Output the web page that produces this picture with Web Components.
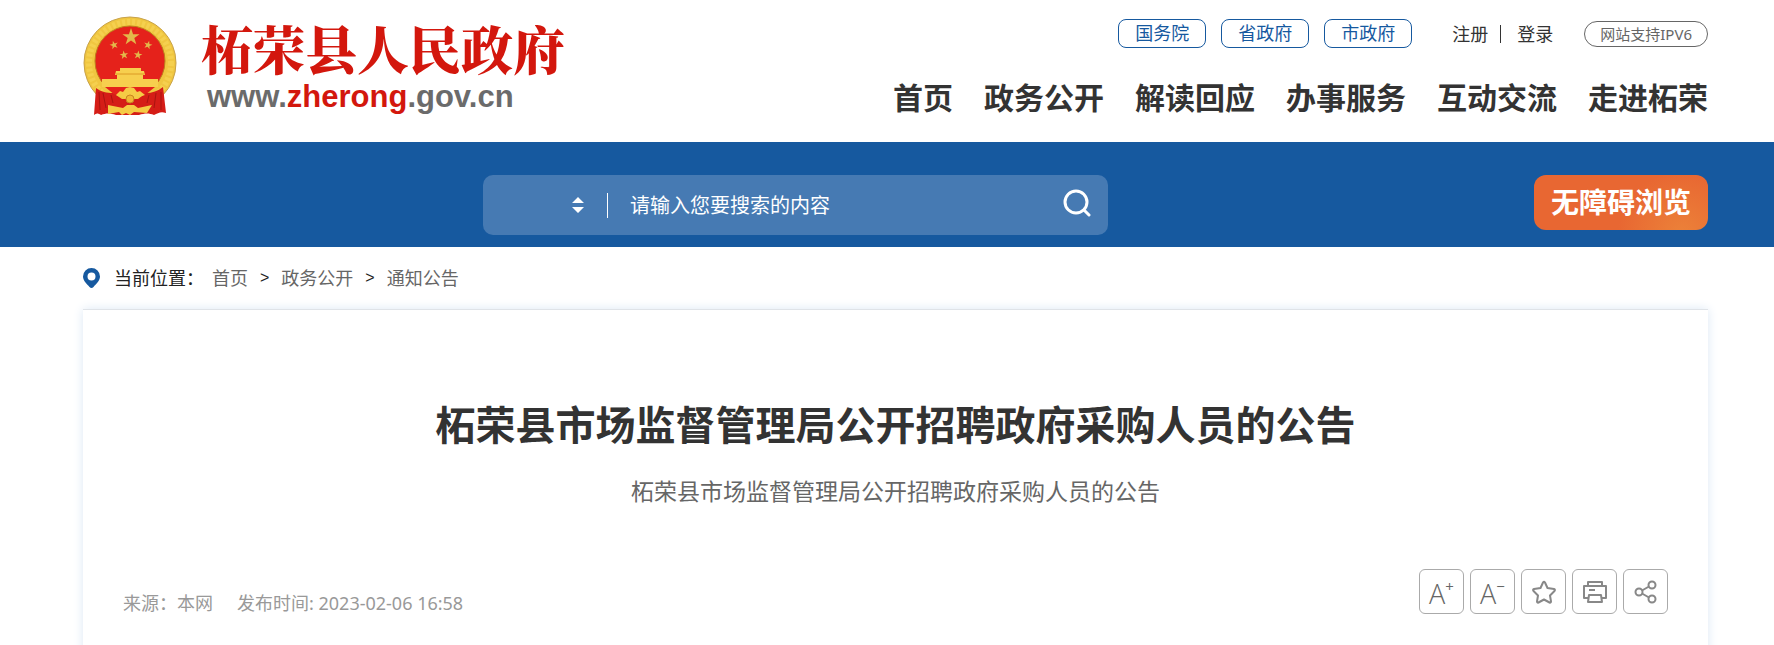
<!DOCTYPE html>
<html lang="zh-CN">
<head>
<meta charset="utf-8">
<title>柘荣县市场监督管理局公开招聘政府采购人员的公告</title>
<style>
  body {
    margin: 0;
    background: #fff;
    color: #333;
    font-family: "Noto Sans", "Noto Sans CJK SC", sans-serif;
    font-size: 18px;
    line-height: 28px;
    --blue: #16599f;
    --left: 83px;
    --right: 66px;
  }
</style>
</head>
<body>

<site-header>
  <site-logo slot="logo"></site-logo>
  <top-links slot="top"></top-links>
  <main-nav slot="nav"></main-nav>
</site-header>
<search-bar></search-bar>
<bread-crumb></bread-crumb>
<article-card>
  <span slot="title">柘荣县市场监督管理局公开招聘政府采购人员的公告</span>
  <span slot="subtitle">柘荣县市场监督管理局公开招聘政府采购人员的公告</span>
  <span slot="source">来源：本网</span>
  <span slot="date">发布时间: 2023-02-06 16:58</span>
  <tool-bar slot="tools"></tool-bar>
</article-card>

<template id="site-header">
  <style>
    :host { display: block; }
    header {
      display: flex;
      justify-content: space-between;
      align-items: flex-start;
      padding: 16px var(--right) 24px var(--left);
    }
    .right {
      display: flex;
      flex-direction: column;
      align-items: flex-end;
      gap: 30px;
      padding-top: 3px;
    }
  </style>
  <header>
    <slot name="logo"></slot>
    <div class="right">
      <slot name="top"></slot>
      <slot name="nav"></slot>
    </div>
  </header>
</template>

<template id="site-logo">
  <style>
    :host { display: block; }
    a { display: flex; gap: 22px; color: #d3170d; text-decoration: none; }
    svg { display: block; width: 96px; height: 100px; }
    .name {
      display: block;
      font: 900 52px/64px "Noto Serif CJK SC", "Noto Sans CJK SC", serif;
      white-space: nowrap;
    }
    .url {
      display: block;
      padding-left: 6px;
      font: bold 31px/34px "Liberation Sans", sans-serif;
      color: #6b6b6b;
    }
    b { color: #d3170d; }
  </style>
  <a href="#">
    <svg viewBox="0 0 96 100" aria-hidden="true">
      <defs>
        <path id="star" d="M0-10 2.3-3.1 9.5-3.1 3.7 1.2 5.9 8.1 0 3.8-5.9 8.1-3.7 1.2-9.5-3.1-2.3-3.1z"/>
      </defs>
      <circle cx="47" cy="47" r="46" fill="#f0c640" stroke="#c8a24a"/>
      <circle cx="47" cy="47" r="41" fill="none" stroke="#f5d04f" stroke-width="6" stroke-dasharray="3 2"/>
      <circle cx="47" cy="45" r="35" fill="#e5221b" stroke="#bd7d1c"/>
      <g fill="#e3b84a">
        <use href="#star" transform="translate(48 21) scale(.9)"/>
        <use href="#star" transform="translate(31 29) rotate(-15) scale(.45)"/>
        <use href="#star" transform="translate(65 29) rotate(15) scale(.45)"/>
        <use href="#star" transform="translate(41 39) rotate(-8) scale(.45)"/>
        <use href="#star" transform="translate(55 39) rotate(8) scale(.45)"/>
      </g>
      <path fill="#f7cf4e" d="M37 52h21v3h3l1 4h-2v4h15v8H19v-8h15v-4h-2l1-4h4z"/>
      <path stroke="#dc9a25" d="M33 58h28" fill="none"/>
      <path fill="#e5221b" d="M22 71h50l-10 8H32z"/>
      <path fill="#d51d17" d="M13 72c5 4 11 5 17 5l9 6h16l8-6c6 0 12-2 17-6l3 26c-5-2-8 0-12 2-5-2-9-2-15 0H33c-6-2-10-2-15 0-3-2-5-2-7 0z"/>
      <path stroke="#a91410" stroke-width="1" fill="none" d="M20 77l3 15M28 79l2 8M73 77l-2 15M66 79l-2 8M16 76l1 18M78 76v18"/>
      <path fill="#f5cb45" d="M33 79l4-4 3 1 3-4 4-1 4 1 3 4 3-1 5 4-6 2-4 2H43l-4-2z"/>
      <path fill="#f5cb45" d="M25 89l15 3 4-3h7l4 3 14-3-5 8-13-1-4 3-4-2-4 2-3-3-11 2z"/>
      <circle cx="47" cy="83" r="4" fill="#f1b735" stroke="#c78420"/>
    </svg>
    <span>
      <span class="name">柘荣县人民政府</span>
      <span class="url">www.<b>zherong</b>.gov.cn</span>
    </span>
  </a>
</template>

<template id="top-links">
  <style>
    :host { display: flex; align-items: center; height: 29px; white-space: nowrap; }
    a { color: #333; text-decoration: none; }
    .gov { display: flex; gap: 15px; margin-right: 40px; }
    .gov a {
      padding: 0 16px;
      border: 1px solid var(--blue);
      border-radius: 8px;
      color: var(--blue);
      line-height: 27px;
    }
    .user { display: flex; align-items: center; }
    .user i { width: 1px; height: 18px; margin: 0 16px 0 12px; background: #333; }
    .ipv6 {
      margin-left: 31px;
      padding: 0 15px;
      border: 1px solid #666;
      border-radius: 13px;
      color: #666;
      font-size: 15px;
      line-height: 24px;
    }
  </style>
  <div class="gov">
    <a href="#">国务院</a>
    <a href="#">省政府</a>
    <a href="#">市政府</a>
  </div>
  <div class="user"><a href="#">注册</a><i></i><a href="#">登录</a></div>
  <a class="ipv6" href="#">网站支持IPV6</a>
</template>

<template id="main-nav">
  <style>
    :host { display: block; }
    nav { display: flex; gap: 31px; }
    a {
      color: #333;
      font-size: 30px;
      font-weight: bold;
      line-height: 40px;
      text-decoration: none;
      white-space: nowrap;
    }
  </style>
  <nav>
    <a href="#">首页</a>
    <a href="#">政务公开</a>
    <a href="#">解读回应</a>
    <a href="#">办事服务</a>
    <a href="#">互动交流</a>
    <a href="#">走进柘荣</a>
  </nav>
</template>

<template id="search-bar">
  <style>
    :host { display: block; background: var(--blue); }
    .row {
      display: flex;
      justify-content: space-between;
      align-items: flex-start;
      padding: 33px var(--right) 12px var(--left);
    }
    form {
      display: flex;
      align-items: center;
      flex: 0 1 625px;
      height: 60px;
      margin-left: 400px;
      border-radius: 10px;
      background: #467ab3;
    }
    .type { display: grid; align-items: center; width: 124px; border-right: 1px solid #fff; }
    .type > * { grid-area: 1 / 1; }
    .type svg { justify-self: end; margin-right: 23px; pointer-events: none; }
    select {
      appearance: none;
      width: 100%;
      height: 25px;
      border: 0;
      background: none;
      color: #fff;
      font: inherit;
    }
    input {
      flex: 1;
      min-width: 0;
      padding: 2px 0 0 22px;
      border: 0;
      outline: 0;
      background: none;
      color: #fff;
      font: inherit;
      font-size: 20px;
      line-height: 30px;
    }
    input::placeholder { color: #fff; opacity: 1; }
    button { border: 0; font: inherit; cursor: pointer; }
    .go { display: flex; padding: 0 17px 4px; background: none; }
    .access {
      height: 55px;
      padding: 0 17px 2px;
      border-radius: 12px;
      background: radial-gradient(circle at 85% 110%, #ec8239, #e86732 40%);
      color: #fff;
      font-size: 28px;
      font-weight: bold;
      white-space: nowrap;
    }
  </style>
  <div class="row">
    <form role="search">
      <div class="type">
        <select aria-label="搜索类型"><option></option></select>
        <svg width="12" height="16" viewBox="0 0 12 16" fill="#fff" aria-hidden="true">
          <path d="M6 0l6 6H0zM6 16l6-6H0z"/>
        </svg>
      </div>
      <input type="text" placeholder="请输入您要搜索的内容" aria-label="搜索内容">
      <button class="go" type="button" aria-label="搜索">
        <svg width="28" height="28" viewBox="0 0 28 28" fill="none" stroke="#fff" stroke-width="3" stroke-linecap="round" aria-hidden="true">
          <circle cx="13" cy="13" r="11"/>
          <path d="M21 21l5 5"/>
        </svg>
      </button>
    </form>
    <button class="access" type="button">无障碍浏览</button>
  </div>
</template>

<template id="bread-crumb">
  <style>
    :host { display: block; }
    nav {
      display: flex;
      align-items: center;
      gap: 12px;
      height: 62px;
      padding: 0 var(--right) 0 var(--left);
    }
    .here { display: flex; align-items: center; gap: 14px; margin-right: -4px; color: #222; }
    a { color: #666; text-decoration: none; }
    i { color: #222; font: 16px/28px "Liberation Sans", sans-serif; }
  </style>
  <nav aria-label="当前位置">
    <span class="here">
      <svg width="17" height="20" viewBox="0 0 17 20" aria-hidden="true">
        <path fill="#16599f" fill-rule="evenodd" d="M8.500 0a8.500 8.500 0 0 1 8.500 8.500c0 4.500-4 7.500-6.500 10.500q-2 2-4 0C4 16 0 13 0 8.500A8.500 8.500 0 0 1 8.500 0zm0 4.500a4 4 0 1 0 0 8 4 4 0 0 0 0-8z"/>
      </svg>
      当前位置：
    </span>
    <a href="#">首页</a><i>&gt;</i>
    <a href="#">政务公开</a><i>&gt;</i>
    <a href="#">通知公告</a>
  </nav>
</template>

<template id="article-card">
  <style>
    :host { display: block; }
    article {
      margin: 0 var(--right) 0 var(--left);
      padding: 85px 40px 50px;
      border-top: 1px solid #dfe3e8;
      box-shadow: 0 0 10px #dce8f5;
      text-align: center;
    }
    h1 { margin: 0; font-size: 40px; line-height: 60px; }
    .sub { margin: 20px 0 0; color: #666; font-size: 23px; line-height: 32px; }
    .meta { display: flex; align-items: flex-end; margin-top: 62px; color: #999; }
    .meta slot { display: block; }
    .text { display: flex; gap: 24px; line-height: 22px; }
    slot[name="tools"] { margin-left: auto; }
  </style>
  <article>
    <h1><slot name="title"></slot></h1>
    <p class="sub"><slot name="subtitle"></slot></p>
    <div class="meta">
      <div class="text"><slot name="source"></slot><slot name="date"></slot></div>
      <slot name="tools"></slot>
    </div>
  </article>
</template>

<template id="tool-bar">
  <style>
    :host { display: flex; gap: 6px; }
    button {
      display: flex;
      align-items: center;
      justify-content: center;
      width: 45px;
      height: 45px;
      padding: 0;
      border: 1px solid #aaa;
      border-radius: 6px;
      background: #fff;
      color: #666;
      cursor: pointer;
    }
    .size { align-items: flex-start; font: 300 27px/48px "Open Sans", sans-serif; }
    .size sup { font-size: 15px; font-weight: 400; line-height: 32px; }
    svg { fill: none; stroke: #888; stroke-width: 2; stroke-linejoin: round; }
  </style>
  <button class="size" type="button" aria-label="放大字体">A<sup>+</sup></button>
  <button class="size" type="button" aria-label="缩小字体">A<sup>−</sup></button>
  <button type="button" aria-label="收藏">
    <svg width="24" height="24" viewBox="0 0 24 24">
      <path d="M11 2.500q1-1.500 2 0l2.500 5.500 6.500 1q1.500.500.500 2L18 15.500l1 6q0 1.500-1.500 1L12 19.500l-5.500 3q-1.500.500-1.500-1l1-6L1.500 11q-1-1.500.500-2l6.500-1z"/>
    </svg>
  </button>
  <button type="button" aria-label="打印">
    <svg width="24" height="24" viewBox="0 0 24 24">
      <path d="M5 6V2h14v4M5 18H1V6h22v12h-4M6 15h12l1 7H5zM6 10h6"/>
    </svg>
  </button>
  <button type="button" aria-label="分享">
    <svg width="24" height="24" viewBox="0 0 24 24">
      <circle cx="5" cy="12" r="3.500"/>
      <circle cx="18" cy="5" r="3.500"/>
      <circle cx="18" cy="19" r="3.500"/>
      <path d="M8 10.500l7-4M8 13.500l7 4"/>
    </svg>
  </button>
</template>

<script>
// Every element clones the template that carries its own name
class TemplateElement extends HTMLElement {
  constructor() {
    super();
    const tmpl = document.getElementById(this.localName);
    this.attachShadow({mode: 'open'}).appendChild(tmpl.content.cloneNode(true));
  }
}

class SiteHeader extends TemplateElement {}
class SiteLogo extends TemplateElement {}
class TopLinks extends TemplateElement {}
class MainNav extends TemplateElement {}
class SearchBar extends TemplateElement {}
class BreadCrumb extends TemplateElement {}
class ArticleCard extends TemplateElement {}
class ToolBar extends TemplateElement {}

customElements.define('site-header', SiteHeader);
customElements.define('site-logo', SiteLogo);
customElements.define('top-links', TopLinks);
customElements.define('main-nav', MainNav);
customElements.define('search-bar', SearchBar);
customElements.define('bread-crumb', BreadCrumb);
customElements.define('article-card', ArticleCard);
customElements.define('tool-bar', ToolBar);
</script>
</body>
</html>
